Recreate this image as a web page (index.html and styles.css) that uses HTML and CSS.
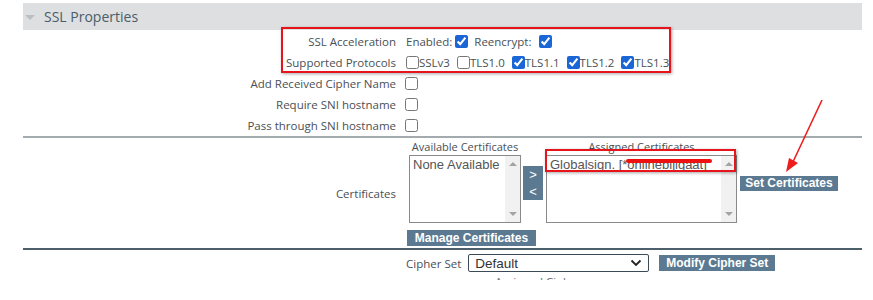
FILE: index.html
```html
<!DOCTYPE html>
<html lang="en">
<head>
  <meta charset="UTF-8">
  <title>SSL Properties</title>
  <link rel="stylesheet" href="styles.css">
</head>
<body>
  <div class="panel">
    <div class="panel-head"><span class="caret"></span>SSL Properties</div>

    <div class="rows">
      <div class="row">
        <div class="label">SSL Acceleration</div>
        <div class="ctrl">
          <span class="opt">Enabled:<input type="checkbox" checked></span>
          <span class="opt">Reencrypt:<input type="checkbox" checked class="gap"></span>
        </div>
      </div>
      <div class="row">
        <div class="label">Supported Protocols</div>
        <div class="ctrl protocols">
          <label><input type="checkbox">SSLv3</label>
          <label><input type="checkbox">TLS1.0</label>
          <label><input type="checkbox" checked>TLS1.1</label>
          <label><input type="checkbox" checked>TLS1.2</label>
          <label><input type="checkbox" checked>TLS1.3</label>
        </div>
      </div>
      <div class="row">
        <div class="label">Add Received Cipher Name</div>
        <div class="ctrl"><input type="checkbox"></div>
      </div>
      <div class="row">
        <div class="label">Require SNI hostname</div>
        <div class="ctrl"><input type="checkbox"></div>
      </div>
      <div class="row">
        <div class="label">Pass through SNI hostname</div>
        <div class="ctrl"><input type="checkbox"></div>
      </div>
    </div>

    <div class="certs">
      <div class="label">Certificates</div>
      <div class="cert-ctrl">
        <div class="cert-lists">
          <div class="cert-col">
            <div class="cert-title">Available Certificates</div>
            <div class="listbox small">
              <div class="list-items">None Available</div>
              <div class="scroll"><span class="up"></span><span class="down"></span></div>
            </div>
          </div>
          <div class="move">
            <button class="btn arrow">&gt;</button>
            <button class="btn arrow">&lt;</button>
          </div>
          <div class="cert-col">
            <div class="cert-title">Assigned Certificates</div>
            <div class="listbox wide">
              <div class="list-items">Globalsign. [*onlinebijigaat]</div>
              <div class="scroll"><span class="up"></span><span class="down"></span></div>
            </div>
          </div>
          <button class="btn set">Set Certificates</button>
        </div>
        <button class="btn manage">Manage Certificates</button>
      </div>
    </div>

    <div class="cipher">
      <span class="cipher-label">Cipher Set</span>
      <div class="select">Default<svg width="12" height="8" viewBox="0 0 12 8"><path d="M1.5 1.5 L6 6 L10.5 1.5" fill="none" stroke="#222" stroke-width="1.8"/></svg></div>
      <button class="btn modify">Modify Cipher Set</button>
    </div>
    <div class="cut">Assigned Ciphers</div>
  </div>

  <div class="mark mark-top"></div>
  <div class="mark mark-cert"></div>
  <div class="scribble"></div>
  <svg class="pointer" width="60" height="80" viewBox="0 0 60 80">
    <line x1="52" y1="2" x2="22" y2="66" stroke="#ee1c1c" stroke-width="1.6"/>
    <path d="M16 74 L19 60 L28 65 Z" fill="#ee1c1c"/>
  </svg>
</body>
</html>
```

FILE: styles.css
```css
body {
  margin: 0;
  padding-top: 3px;
  font-family: "Open Sans", Arial, sans-serif;
  font-size: 11.5px;
  color: #4a4f55;
  background: #fff;
  position: relative;
  height: 300px;
  overflow: hidden;
}
.panel {
  width: 839px;
  margin-left: 23px;
}
.panel-head {
  height: 27px;
  background: #dddfe0;
  display: flex;
  align-items: center;
  font-size: 14px;
  color: #4b5d6b;
}
.caret {
  width: 0;
  height: 0;
  border-left: 5px solid transparent;
  border-right: 5px solid transparent;
  border-top: 5px solid #b9bfc3;
  margin: 2px 9px 0 2px;
}
.rows {
  padding-top: 1px;
  border-bottom: 2px solid #a3abae;
}
.row {
  display: grid;
  grid-template-columns: 373px 1fr;
  column-gap: 9px;
  height: 21px;
  align-items: center;
}
.label {
  text-align: right;
}
.ctrl {
  display: flex;
  align-items: center;
}
input[type=checkbox] {
  width: 13px;
  height: 13px;
  margin: 0;
  accent-color: #1a66d6;
}
.opt {
  display: flex;
  align-items: center;
  gap: 3px;
  margin-left: 1px;
  margin-right: 5px;
}
.opt .gap { margin-left: 4px; }
.protocols label {
  display: flex;
  align-items: center;
  margin-right: 7px;
}
.protocols { margin-left: 1px; }
.certs {
  display: grid;
  grid-template-columns: 373px 1fr;
  column-gap: 9px;
  align-items: center;
  padding: 3px 0 2px;
  border-bottom: 2px solid #4d5f6b;
}
.cert-ctrl {
  padding-left: 2px;
}
.cert-lists {
  display: flex;
  align-items: flex-start;
  padding-left: 2px;
}
.cert-col {
  display: flex;
  flex-direction: column;
}
.cert-title {
  height: 14px;
  line-height: 12px;
  font-size: 11px;
  text-align: center;
}
.listbox {
  height: 66px;
  border: 1px solid #8a8a8a;
  display: flex;
  font-family: Arial, "Liberation Sans", sans-serif;
  font-size: 13px;
  color: #555;
}
.listbox.small { width: 110px; }
.listbox.wide { width: 189px; }
.list-items {
  flex: 1;
  padding: 1px 3px;
  white-space: nowrap;
  overflow: hidden;
}
.scroll {
  width: 15px;
  background: #f1f1f1;
  display: flex;
  flex-direction: column;
  justify-content: space-between;
  align-items: center;
  padding: 6px 0;
}
.up, .down {
  width: 0;
  height: 0;
  border-left: 4px solid transparent;
  border-right: 4px solid transparent;
}
.up { border-bottom: 4px solid #a3a3a3; }
.down { border-top: 4px solid #a3a3a3; }
.btn {
  background: #5b7a92;
  color: #fff;
  border: none;
  border-radius: 0;
  font-family: Arial, "Liberation Sans", sans-serif;
  font-weight: bold;
  font-size: 12px;
  padding: 0;
  height: 15px;
  line-height: 15px;
}
.move {
  display: flex;
  flex-direction: column;
  margin: 25px 3px 0 2px;
}
.arrow {
  width: 20px;
  height: 17px;
  font-size: 13px;
  font-weight: normal;
}
.set {
  width: 98px;
  margin: 35px 0 0 3px;
}
.manage {
  width: 129px;
  height: 16px;
  margin-top: 7px;
}
.cipher {
  display: flex;
  align-items: center;
  gap: 7px;
  padding: 4px 0 0 383px;
}
.select {
  width: 167px;
  height: 16px;
  border: 1px solid #3c4a55;
  border-radius: 2px;
  display: flex;
  align-items: center;
  justify-content: space-between;
  padding: 0 6px 0 6px;
  font-family: Arial, "Liberation Sans", sans-serif;
  font-size: 13.5px;
  color: #333;
}
.modify {
  width: 116px;
  height: 16px;
  margin-left: 3px;
}
.cut {
  height: 5px;
  overflow: hidden;
  margin: 3px 0 0 472px;
  line-height: 14px;
  color: #666;
}
.mark {
  position: absolute;
  border: 2px solid #e8141c;
  box-shadow: 1px 1px 3px rgba(0,0,0,0.35);
}
.mark-top {
  left: 281px;
  top: 27px;
  width: 386px;
  height: 42px;
}
.mark-cert {
  left: 545px;
  top: 149px;
  width: 187px;
  height: 19px;
}
.scribble {
  position: absolute;
  left: 626px;
  top: 159px;
  width: 86px;
  height: 4px;
  background: #ee1111;
  border-radius: 2px;
}
.pointer {
  position: absolute;
  left: 770px;
  top: 98px;
}
```
